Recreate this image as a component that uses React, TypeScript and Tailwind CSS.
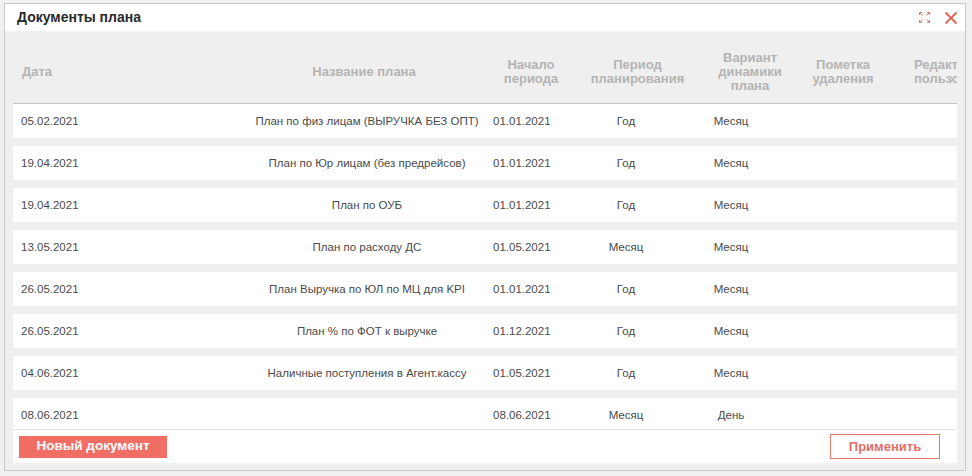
import React from "react";

const rows = [
  ["05.02.2021", "План по физ лицам (ВЫРУЧКА БЕЗ ОПТ)", "01.01.2021", "Год", "Месяц"],
  ["19.04.2021", "План по Юр лицам (без предрейсов)", "01.01.2021", "Год", "Месяц"],
  ["19.04.2021", "План по ОУБ", "01.01.2021", "Год", "Месяц"],
  ["13.05.2021", "План по расходу ДС", "01.05.2021", "Месяц", "Месяц"],
  ["26.05.2021", "План Выручка по ЮЛ по МЦ для KPI", "01.01.2021", "Год", "Месяц"],
  ["26.05.2021", "План % по ФОТ к выручке", "01.12.2021", "Год", "Месяц"],
  ["04.06.2021", "Наличные поступления в Агент.кассу", "01.05.2021", "Год", "Месяц"],
  ["08.06.2021", "", "08.06.2021", "Месяц", "День"],
];

const grid = "grid grid-cols-[235px_238px_90px_123px_102px_84px_1fr]";

function ExpandIcon() {
  return (
    <svg width="13" height="13" viewBox="0 0 13 13" fill="none" stroke="#e8766c" strokeWidth="1">
      <path d="M1.5 1.5 L4.5 4.5 M1.5 1.5 H4 M1.5 1.5 V4" />
      <path d="M11.5 1.5 L8.5 4.5 M11.5 1.5 H9 M11.5 1.5 V4" />
      <path d="M1.5 11.5 L4.5 8.5 M1.5 11.5 H4 M1.5 11.5 V9" />
      <path d="M11.5 11.5 L8.5 8.5 M11.5 11.5 H9 M11.5 11.5 V9" />
    </svg>
  );
}

function CloseIcon() {
  return (
    <svg width="14" height="14" viewBox="0 0 14 14" fill="none" stroke="#e0685d" strokeWidth="2">
      <path d="M1.5 1.5 L12.5 12.5 M12.5 1.5 L1.5 12.5" />
    </svg>
  );
}

export default function App() {
  return (
    <div
      className="w-[972px] h-[476px] bg-[#f0f0f0] pt-[3px] pl-[4px]"
      style={{ fontFamily: '"Liberation Sans", Arial, sans-serif' }}
    >
      <div className="w-[962px] h-[468px] border border-[#c9c9c9] bg-[#efefef] flex flex-col">
        <div className="h-[27px] bg-white flex items-center pl-[12px] pr-[7px] shrink-0">
          <div className="text-[14px] font-bold text-[#2a2a2a] flex-1">Документы плана</div>
          <div className="flex items-center gap-[13px]">
            <ExpandIcon />
            <CloseIcon />
          </div>
        </div>
        <div className="flex-1 flex flex-col px-[8px] pb-[7px] min-h-0">
          <div className={`${grid} h-[73px] pt-[10px] border-b border-[#c4c4c4] items-center text-[13px] leading-[14px] font-bold text-[#b4b4b4] shrink-0 overflow-hidden`}>
            <div className="pl-[9px]">Дата</div>
            <div className="text-center pr-[6px]">Название плана</div>
            <div className="text-center">Начало<br />периода</div>
            <div className="text-center">Период<br />планирования</div>
            <div className="text-center">Вариант<br />динамики<br />плана</div>
            <div className="text-center">Пометка<br />удаления</div>
            <div className="pl-[29px] whitespace-nowrap">Редактор<br />пользователь</div>
          </div>
          <div className="h-[325px] overflow-hidden flex flex-col gap-[8px] shrink-0">
            {rows.map((r, i) => (
              <div key={i} className={`${grid} h-[34px] pt-[2px] shrink-0 bg-white items-center text-[11.5px] text-[#4a4a4a]`}>
                <div className="pl-[8px]">{r[0]}</div>
                <div className="text-center">{r[1]}</div>
                <div className="pl-[7px]">{r[2]}</div>
                <div className="text-center pr-[23px]">{r[3]}</div>
                <div className="text-center pr-[38px]">{r[4]}</div>
                <div></div>
                <div></div>
              </div>
            ))}
          </div>
          <div className="h-[34px] border-t border-[#e6e6e6] bg-white flex items-center justify-between pl-[6px] pr-[17px] shrink-0">
            <button className="w-[148px] h-[22px] bg-[#f06e63] text-white text-[13.5px] font-bold">Новый документ</button>
            <button className="w-[110px] h-[25px] border border-[#e27a70] text-[#e46e63] text-[13px] font-bold bg-white">Применить</button>
          </div>
        </div>
      </div>
    </div>
  );
}
